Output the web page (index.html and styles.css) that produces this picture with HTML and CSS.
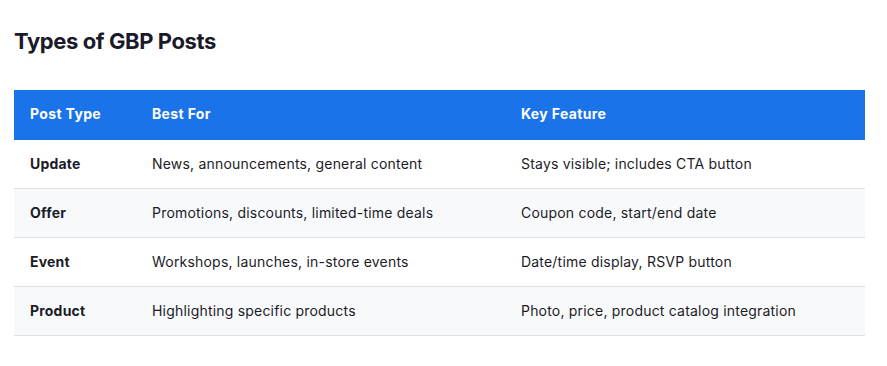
FILE: index.html
```html
<!DOCTYPE html>
<html>
<head>
    <title>Types of GBP Posts</title>
    <link rel="stylesheet" href="styles.css">
</head>
<body>
    <div class="container">
        <h2>Types of GBP Posts</h2>

        <table class="posts">
            <colgroup>
                <col class="col-type">
                <col class="col-best">
                <col>
            </colgroup>
            <thead>
                <tr>
                    <th>Post Type</th>
                    <th>Best For</th>
                    <th>Key Feature</th>
                </tr>
            </thead>
            <tbody>
                <tr>
                    <td class="type">Update</td>
                    <td>News, announcements, general content</td>
                    <td>Stays visible; includes CTA button</td>
                </tr>
                <tr>
                    <td class="type">Offer</td>
                    <td>Promotions, discounts, limited-time deals</td>
                    <td>Coupon code, start/end date</td>
                </tr>
                <tr>
                    <td class="type">Event</td>
                    <td>Workshops, launches, in-store events</td>
                    <td>Date/time display, RSVP button</td>
                </tr>
                <tr>
                    <td class="type">Product</td>
                    <td>Highlighting specific products</td>
                    <td>Photo, price, product catalog integration</td>
                </tr>
            </tbody>
        </table>
    </div>
</body>
</html>
```

FILE: styles.css
```css
body {
    margin: 0;
    padding: 0;
    background: #ffffff;
    font-family: Inter, "Noto Sans", sans-serif;
    color: #1c1c28;
}

.container {
    padding: 27px 22px 0 14px;
}

h2 {
    margin: 0 0 34px 0;
    font-size: 22px;
    line-height: 29px;
    font-weight: 700;
    color: #1a1a2a;
    letter-spacing: -0.4px;
}

.posts {
    width: 100%;
    table-layout: fixed;
    border-collapse: collapse;
    font-size: 14px;
    letter-spacing: 0.2px;
}

.col-type {
    width: 122px;
}

.col-best {
    width: 369px;
}

.posts th {
    background: #1a73e8;
    color: #ffffff;
    font-weight: 700;
    text-align: left;
    height: 47px;
    padding: 0 16px 3px 16px;
    letter-spacing: 0.35px;
}

.posts td {
    height: 46px;
    padding: 0 16px 2px 16px;
    border-bottom: 1px solid #e0e0e0;
}

.posts tbody tr:nth-child(even) td {
    background: #f8f9fa;
}

.posts td.type {
    font-weight: 700;
}
```
